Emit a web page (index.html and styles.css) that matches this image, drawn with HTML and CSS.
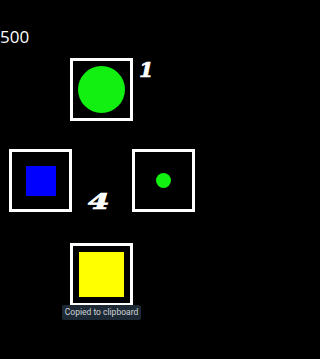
FILE: index.html
```html
<!DOCTYPE html>
<html>
<head>
<meta charset="utf-8">
<link rel="stylesheet" href="styles.css">
</head>
<body>
<main class="screen">
  <div class="score">500</div>
  <div class="row-top">
    <div class="box"><span class="circle big"></span></div>
    <span class="num num-one">1</span>
  </div>
  <div class="row-mid">
    <div class="box"><span class="square small"></span></div>
    <span class="num-slot"><span class="num num-four">4</span></span>
    <div class="box"><span class="circle dot"></span></div>
  </div>
  <div class="row-bottom">
    <div class="box"><span class="square yellow"></span></div>
  </div>
  <div class="toast">Copied to clipboard</div>
</main>
</body>
</html>
```
FILE: styles.css
```css
html, body {
  margin: 0;
  padding: 0;
  background: #000;
}
.screen {
  position: relative;
  width: 202px;
  height: 359px;
  display: flex;
  flex-direction: column;
  background: #000;
  overflow: hidden;
}
.score {
  margin-top: 25px;
  height: 23px;
  line-height: 23px;
  font-family: "Open Sans", sans-serif;
  font-size: 17px;
  color: #fff;
}
.box {
  box-sizing: border-box;
  width: 63px;
  height: 63px;
  border: 3px solid #fff;
  background: #000;
  display: flex;
  align-items: center;
  justify-content: center;
}
.circle {
  display: block;
  border-radius: 50%;
  background: #11f011;
}
.circle.big {
  width: 47px;
  height: 47px;
}
.circle.dot {
  width: 15px;
  height: 15px;
}
.square {
  display: block;
}
.square.small {
  width: 30px;
  height: 30px;
  background: #0000ff;
}
.square.yellow {
  width: 45px;
  height: 45px;
  background: #ffff00;
}
.row-top {
  margin-top: 10px;
  display: grid;
  grid-template-columns: 70px 63px 1fr;
}
.row-top .box {
  grid-column: 2;
}
.num {
  font-family: "DejaVu Serif", serif;
  font-weight: bold;
  font-style: italic;
  color: #fff;
  -webkit-text-stroke: 0.7px #fff;
}
.num-one {
  grid-column: 3;
  align-self: start;
  margin-left: 6px;
  font-size: 21px;
  line-height: 24px;
  margin-top: 0;
}
.row-mid {
  margin-top: 28px;
  display: flex;
  justify-content: space-between;
  padding: 0 7px 0 9px;
}
.num-slot {
  align-self: flex-end;
  display: block;
  width: 24px;
  height: 24px;
  margin-bottom: -1px;
  margin-left: 2px;
}
.num-four {
  display: block;
  font-size: 23px;
  line-height: 24px;
  transform: scaleX(1.35);
  transform-origin: left center;
  margin-left: -3px;
}
.row-bottom {
  margin-top: 31px;
  display: flex;
  justify-content: center;
  padding-left: 1px;
}
.toast {
  position: absolute;
  left: 62px;
  top: 305px;
  width: 79px;
  height: 15px;
  border-radius: 2px;
  background: #1d2a35;
  color: #cfd3d7;
  font-family: Roboto, sans-serif;
  font-size: 8.5px;
  line-height: 15px;
  text-align: center;
  white-space: nowrap;
}
```
